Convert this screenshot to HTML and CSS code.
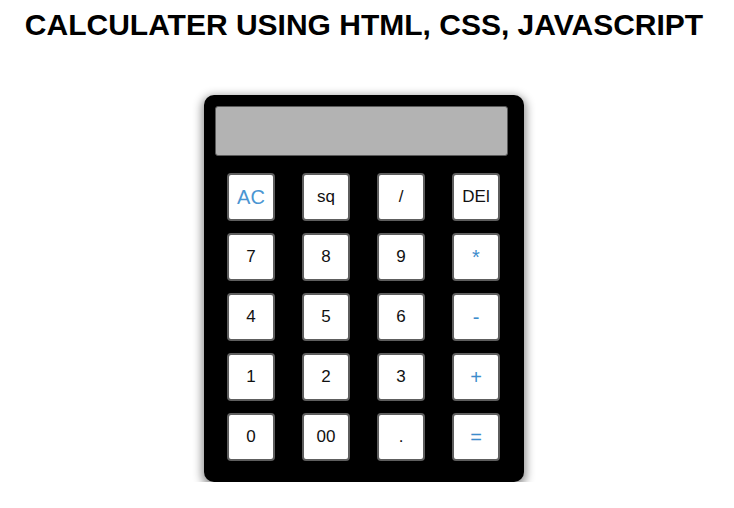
FILE: index.html
```html
<!DOCTYPE html>
<html>
<head>
<meta charset="utf-8">
<title>Calculator</title>
<link rel="stylesheet" href="styles.css">
</head>
<body>
<h1 class="title">CALCULATER USING HTML, CSS, JAVASCRIPT</h1>
<div class="calc">
  <div class="display"></div>
  <div class="keys">
    <button class="key key-ac">AC</button>
    <button class="key">sq</button>
    <button class="key">/</button>
    <button class="key">DEl</button>
    <button class="key">7</button>
    <button class="key">8</button>
    <button class="key">9</button>
    <button class="key key-op">*</button>
    <button class="key">4</button>
    <button class="key">5</button>
    <button class="key">6</button>
    <button class="key key-op">-</button>
    <button class="key">1</button>
    <button class="key">2</button>
    <button class="key">3</button>
    <button class="key key-op">+</button>
    <button class="key">0</button>
    <button class="key">00</button>
    <button class="key">.</button>
    <button class="key key-op">=</button>
  </div>
</div>
</body>
</html>
```
FILE: styles.css
```css
html, body {
  margin: 0;
  background: #ffffff;
}
body {
  padding: 8px 6px 0 0;
  font-family: "Liberation Sans", Arial, sans-serif;
}
.title {
  margin: 0;
  font-size: 30px;
  line-height: 34px;
  font-weight: bold;
  text-align: center;
  color: #000;
}
.calc {
  width: 320px;
  height: 387px;
  box-sizing: border-box;
  margin: 53px auto 0;
  padding: 11px;
  background: #000;
  border-radius: 10px;
  box-shadow: 0 3px 10px 2px rgba(0, 0, 0, 0.45);
}
.display {
  width: 293px;
  height: 50px;
  box-sizing: border-box;
  background: #b3b3b3;
  border: 1px solid #5a5a5a;
  border-radius: 3px;
}
.keys {
  display: grid;
  grid-template-columns: repeat(4, 48px);
  grid-auto-rows: 48px;
  column-gap: 27px;
  row-gap: 12px;
  margin: 17px 0 0 12px;
}
.key {
  box-sizing: border-box;
  margin: 0;
  padding: 0;
  background: #fff;
  border: 2px solid #5e5e5e;
  border-radius: 4px;
  font-family: "Liberation Sans", Arial, sans-serif;
  font-size: 17px;
  color: #111;
}
.key-ac {
  font-size: 20px;
  color: #4a95d2;
}
.key-op {
  font-size: 20px;
  color: #3d8ccc;
}
```
